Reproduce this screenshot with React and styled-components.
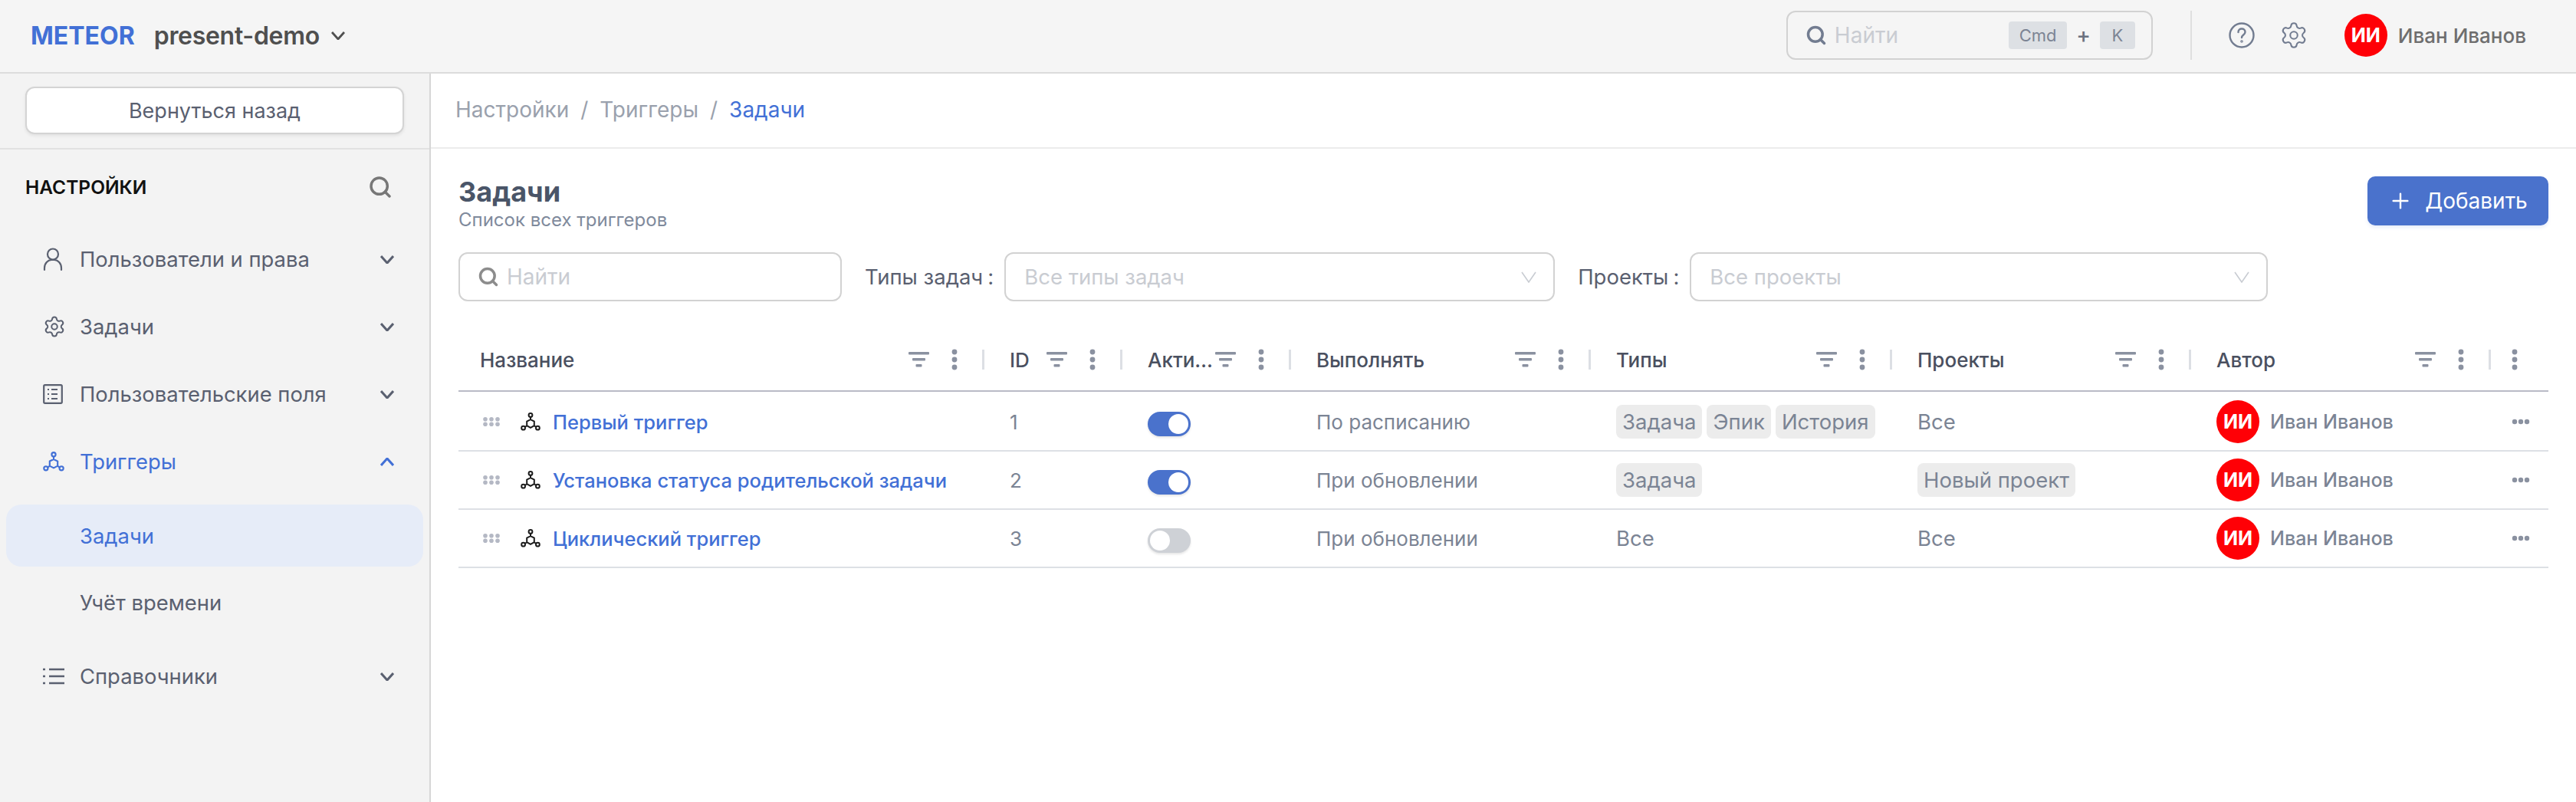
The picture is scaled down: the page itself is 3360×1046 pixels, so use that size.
import React from 'react';
import styled, { createGlobalStyle } from 'styled-components';
import { Settings, Plus, Search } from 'lucide-react';

const GlobalStyle = createGlobalStyle`
  html, body { margin: 0; padding: 0; height: 100%; background: #fff; }
  * { box-sizing: border-box; }
  body { font-family: Inter, "Noto Sans", sans-serif; overflow: hidden; }
`;

const Page = styled.div`
  display: flex;
  flex-direction: column;
  height: 100vh;
`;

const TopBar = styled.header`
  display: flex;
  align-items: center;
  height: 96px;
  flex-shrink: 0;
  padding: 0 65px 2px 40px;
  background: #f5f5f5;
  border-bottom: 2px solid #dcdcdc;
`;

const Logo = styled.span`
  font-size: 32px;
  font-weight: 700;
  color: #4270d6;
`;

const Workspace = styled.span`
  display: flex;
  align-items: center;
  gap: 15px;
  margin-left: 25px;
  font-size: 32px;
  font-weight: 600;
  color: #4f4f4f;
  letter-spacing: -0.3px;
`;

const TopRight = styled.div`
  display: flex;
  align-items: center;
  margin-left: auto;
`;

const GlobalSearch = styled.div`
  display: flex;
  align-items: center;
  width: 478px;
  height: 64px;
  padding: 0 21px 0 23px;
  border: 2px solid #d2d2d2;
  border-radius: 12px;
`;

const Placeholder = styled.span`
  margin-left: 10px;
  font-size: 28px;
  color: #c9ccd2;
`;

const Kbd = styled.span`
  display: flex;
  align-items: center;
  justify-content: center;
  width: ${(p) => p.$w}px;
  height: 36px;
  border-radius: 4px;
  background: #dde0e4;
  font-size: 22px;
  color: #7c8494;
`;

const KbdPlus = styled.span`
  margin: 0 12px;
  font-size: 28px;
  font-weight: 500;
  color: #6b7280;
`;

const KbdGroup = styled.div`
  display: flex;
  align-items: center;
  margin-left: auto;
`;

const VLine = styled.div`
  width: 2px;
  height: 64px;
  margin: 0 48px 0 49px;
  background: #dfdfdf;
`;

const IconBtn = styled.span`
  display: flex;
  color: #727c90;
  margin-right: ${(p) => p.$right}px;
`;

const Avatar = styled.span`
  display: flex;
  align-items: center;
  justify-content: center;
  flex-shrink: 0;
  width: 56px;
  height: 56px;
  border-radius: 50%;
  background: #ff0006;
  color: #fff;
  font-size: 25px;
  font-weight: 700;
`;

const TopUser = styled.span`
  margin-left: 14px;
  font-size: 26px;
  font-weight: 500;
  color: #6e6e6e;
`;

const Body = styled.div`
  display: flex;
  flex: 1;
  min-height: 0;
`;

const Sidebar = styled.aside`
  width: 562px;
  flex-shrink: 0;
  background: #f3f3f3;
  border-right: 2px solid #d6d6d6;
`;

const BackRow = styled.div`
  padding: 17px 33px 18px;
  border-bottom: 2px solid #e2e2e2;
`;

const BackButton = styled.button`
  display: block;
  width: 100%;
  height: 62px;
  border: 2px solid #d4d4d4;
  border-radius: 12px;
  background: #fff;
  box-shadow: 0 2px 4px rgba(0, 0, 0, 0.08);
  font-family: inherit;
  font-size: 27px;
  color: #5a6070;
`;

const SideHead = styled.div`
  display: flex;
  align-items: center;
  justify-content: space-between;
  height: 99px;
  padding: 0 48px 1px 33px;
  font-size: 24.5px;
  font-weight: 600;
  color: #111;
`;

const Nav = styled.nav`
  display: flex;
  flex-direction: column;
`;

const NavItem = styled.div`
  display: flex;
  align-items: center;
  height: 88px;
  padding: 0 46px 0 56px;
  font-size: 27.4px;
  color: ${(p) => (p.$active ? '#4270d6' : '#5a6070')};
`;

const NavIcon = styled.span`
  display: flex;
  width: 48px;
  flex-shrink: 0;
`;

const NavLabel = styled.span`
  flex: 1;
`;

const SubNav = styled.div`
  display: flex;
  flex-direction: column;
  padding: 8px 0;
`;

const SubItem = styled.div`
  display: flex;
  align-items: center;
  height: ${(p) => (p.$active ? 81 : 88)}px;
  margin: ${(p) => (p.$active ? '4px 8px 3px' : '0 8px')};
  padding-left: 96px;
  border-radius: 20px;
  background: ${(p) => (p.$active ? '#e6ecf8' : 'transparent')};
  font-size: 27.4px;
  color: ${(p) => (p.$active ? '#4270d6' : '#5a6070')};
`;

const Main = styled.main`
  flex: 1;
  min-width: 0;
`;

const Crumbs = styled.div`
  display: flex;
  align-items: center;
  gap: 15px;
  height: 98px;
  padding: 0 0 2px 32px;
  border-bottom: 2px solid #ececec;
  font-size: 28px;
  color: #9aa1ad;
`;

const CrumbCurrent = styled.span`
  color: #4270d6;
`;

const Content = styled.div`
  padding: 34px 36px 0;
`;

const TitleRow = styled.div`
  display: flex;
  justify-content: space-between;
  align-items: flex-start;
`;

const Title = styled.h1`
  margin: 0;
  font-size: 36px;
  line-height: 44px;
  font-weight: 700;
  color: #4a5568;
`;

const Subtitle = styled.div`
  font-size: 24px;
  line-height: 30px;
  color: #7f8a9c;
`;

const AddButton = styled.button`
  display: flex;
  align-items: center;
  justify-content: center;
  gap: 16px;
  width: 236px;
  height: 64px;
  margin-top: 2px;
  border: none;
  border-radius: 10px;
  background: #4a72cc;
  box-shadow: 0 3px 4px rgba(74, 114, 204, 0.12);
  font-family: inherit;
  font-size: 28px;
  color: #fff;
`;

const Filters = styled.div`
  display: flex;
  align-items: center;
  margin-top: 27px;
`;

const Field = styled.div`
  display: flex;
  align-items: center;
  width: ${(p) => p.$w}px;
  height: 64px;
  padding: 0 ${(p) => (p.$select ? 22 : 20)}px 0 ${(p) => (p.$select ? 24 : 23)}px;
  border: 2px solid #d2d2d2;
  border-radius: 12px;
`;

const FieldText = styled.span`
  flex: 1;
  font-size: 27.5px;
  color: #c9ccd2;
`;

const FilterLabel = styled.span`
  margin: 0 14px 0 30px;
  font-size: 27.5px;
  color: #5a6070;
`;

const Colon = styled.span`
  margin-left: 6px;
`;

const Table = styled.div`
  margin-top: 36px;
`;

const Row = styled.div`
  display: grid;
  grid-template-columns: 686px 180px 220px 391px 393px 390px 391px 1fr;
  height: ${(p) => (p.$head ? 82 : 76)}px;
  border-bottom: 2px solid ${(p) => (p.$head ? '#b9bbc6' : '#dde0e5')};

  &:nth-child(2) {
    height: 78px;
    padding-top: 2px;
  }
`;

const HeadCell = styled.div`
  display: flex;
  align-items: center;
  min-width: 0;
  padding-left: ${(p) => p.$pad || 33}px;
  font-size: 26px;
  font-weight: 500;
  color: #4a5060;
`;

const HeadText = styled.span`
  flex: 1;
  min-width: 0;
  white-space: nowrap;
`;

const HeadSep = styled.span`
  width: 3px;
  height: 26px;
  margin-left: 32px;
  background: #dcdfe4;
`;

const HeadTools = styled.span`
  display: flex;
  align-items: center;
  gap: 29px;
  color: #8a91a0;
`;

const Cell = styled.div`
  display: flex;
  align-items: center;
  gap: ${(p) => p.$gap || 0}px;
  padding-left: ${(p) => p.$pad || 33}px;
  font-size: 26px;
  color: #7b8494;
`;

const RowIcon = styled.span`
  display: flex;
  margin: 0 16px 0 27px;
  color: #1c1c1c;
`;

const NameLink = styled.a`
  font-size: 25.5px;
  font-weight: 500;
  color: #4270d6;
  white-space: nowrap;
`;

const Tag = styled.span`
  display: inline-flex;
  align-items: center;
  height: 44px;
  padding: 0 8px;
  border-radius: 8px;
  background: #ececec;
  font-size: 27.5px;
  color: #7b8494;
`;

const Toggle = styled.span`
  position: relative;
  display: block;
  width: 56px;
  height: 32px;
  margin-top: 6px;
  border-radius: 16px;
  background: ${(p) => (p.$on ? '#4a72cc' : '#ced1d6')};
  box-shadow: 0 2px 3px rgba(0, 0, 0, 0.1);

  &::after {
    content: '';
    position: absolute;
    top: 3px;
    left: ${(p) => (p.$on ? 27 : 3)}px;
    width: 26px;
    height: 26px;
    border-radius: 50%;
    background: #fff;
  }
`;

const PlainText = styled.span`
  font-size: 27.5px;
  color: #7b8494;
`;

const AuthorName = styled.span`
  font-size: 25px;
  font-weight: 500;
  color: #7b8494;
`;

const MenuCell = styled.div`
  display: flex;
  align-items: center;
  padding-left: ${(p) => p.$pad}px;
  color: #8a91a0;
`;

const Chevron = ({ w = 18, h = 11, up, stroke = 3, color = 'currentColor' }) => (
  <svg width={w} height={h} viewBox={`0 0 ${w} ${h}`} fill="none" stroke={color} strokeWidth={stroke}>
    <path d={up ? `M1 ${h - 1}L${w / 2} 1L${w - 1} ${h - 1}` : `M1 1L${w / 2} ${h - 1}L${w - 1} 1`} />
  </svg>
);

const FilterIcon = () => (
  <svg width="27" height="20" viewBox="0 0 27 20" fill="currentColor">
    <rect x="0" y="0" width="27" height="3.5" rx="1" />
    <rect x="5" y="8" width="17" height="3.5" rx="1" />
    <rect x="9.5" y="16" width="8" height="3.5" rx="1" />
  </svg>
);

const Kebab = () => (
  <svg width="8" height="28" viewBox="0 0 8 28" fill="currentColor">
    <circle cx="4" cy="4" r="3.4" />
    <circle cx="4" cy="14" r="3.4" />
    <circle cx="4" cy="24" r="3.4" />
  </svg>
);

const Ellipsis = () => (
  <svg width="24" height="8" viewBox="0 0 24 8" fill="currentColor">
    <circle cx="4" cy="4" r="3.2" />
    <circle cx="12" cy="4" r="3.2" />
    <circle cx="20" cy="4" r="3.2" />
  </svg>
);

const DragDots = () => (
  <svg width="22" height="12" viewBox="0 0 22 12" fill="#b4b8c4">
    {[3, 11, 19].map((x) => [2.8, 9.2].map((y) => <circle key={`${x}-${y}`} cx={x} cy={y} r="2.8" />))}
  </svg>
);

const TriggerIcon = ({ size = 26, height = 24 }) => (
  <svg width={size} height={height} viewBox="0 0 26 24" fill="none" stroke="currentColor" strokeWidth="2">
    <circle cx="13" cy="3.4" r="2.4" />
    <circle cx="3.6" cy="20.2" r="2.4" />
    <circle cx="22.4" cy="20.2" r="2.4" />
    <path d="M13 5.8V9.2M8.2 11.6 13 9.2l4.8 2.4v5.6L13 19.8l-4.8-2.6zM5.8 19l2.4-1.8M20.2 19l-2.4-1.8" />
  </svg>
);

const UserIcon = () => (
  <svg width="26" height="32" viewBox="0 0 26 32" fill="none" stroke="currentColor" strokeWidth="2.2" strokeLinecap="round">
    <circle cx="13" cy="9.5" r="7" />
    <path d="M2 30v-2.5C2 21.5 6.5 17 11 17h4c4.5 0 9 4.5 9 10.5V30" />
  </svg>
);

const FieldsIcon = () => (
  <svg width="26" height="26" viewBox="0 0 26 26" fill="none" stroke="currentColor" strokeWidth="2.2">
    <rect x="1.2" y="1.2" width="23.6" height="23.6" rx="1.5" />
    <path d="M11 7h8M11 13h8M11 19h8M6 7h2M6 13h2M6 19h2" />
  </svg>
);

const ListIcon = () => (
  <svg width="28" height="24" viewBox="0 0 28 24" fill="none" stroke="currentColor" strokeWidth="2.4">
    <path d="M8 3h20M8 12h20M8 21h20M0 3h3M0 12h3M0 21h3" />
  </svg>
);

const HelpIcon = () => (
  <svg width="34" height="34" viewBox="0 0 34 34" fill="none" stroke="currentColor" strokeWidth="2.4" strokeLinecap="round">
    <circle cx="17" cy="17" r="15.5" />
    <path d="M12.5 13c0-3 2-4.5 4.5-4.5s4.5 1.7 4.5 4.2c0 3.8-4.5 3.8-4.5 7.3" />
    <circle cx="17" cy="25" r="0.6" />
  </svg>
);

const navBefore = [
  { label: 'Пользователи и права', icon: <UserIcon /> },
  { label: 'Задачи', icon: <Settings size={30} strokeWidth={1.6} /> },
  { label: 'Пользовательские поля', icon: <FieldsIcon /> },
];

const columns = [
  { title: 'Название', pad: 28 },
  { title: 'ID' },
  { title: 'Акти…' },
  { title: 'Выполнять' },
  { title: 'Типы' },
  { title: 'Проекты' },
  { title: 'Автор' },
];

const rows = [
  { id: 1, name: 'Первый триггер', on: true, run: 'По расписанию', types: ['Задача', 'Эпик', 'История'], projects: null },
  { id: 2, name: 'Установка статуса родительской задачи', on: true, run: 'При обновлении', types: ['Задача'], projects: ['Новый проект'] },
  { id: 3, name: 'Циклический триггер', on: false, run: 'При обновлении', types: null, projects: null },
];

const TagList = ({ items }) =>
  items ? items.map((t) => <Tag key={t}>{t}</Tag>) : <PlainText>Все</PlainText>;

export default function App() {
  return (
    <Page>
      <GlobalStyle />
      <TopBar>
        <Logo>METEOR</Logo>
        <Workspace>
          present-demo
          <Chevron w={18} h={11} stroke={2.8} />
        </Workspace>
        <TopRight>
          <GlobalSearch>
            <Search size={28} strokeWidth={3} color="#727c90" />
            <Placeholder>Найти</Placeholder>
            <KbdGroup>
              <Kbd $w={76}>Cmd</Kbd>
              <KbdPlus>+</KbdPlus>
              <Kbd $w={46}>K</Kbd>
            </KbdGroup>
          </GlobalSearch>
          <VLine />
          <IconBtn $right={32}><HelpIcon /></IconBtn>
          <IconBtn $right={47}><Settings size={38} strokeWidth={1.3} /></IconBtn>
          <Avatar>ИИ</Avatar>
          <TopUser>Иван Иванов</TopUser>
        </TopRight>
      </TopBar>
      <Body>
        <Sidebar>
          <BackRow>
            <BackButton>Вернуться назад</BackButton>
          </BackRow>
          <SideHead>
            НАСТРОЙКИ
            <Search size={32} strokeWidth={2.6} color="#777" />
          </SideHead>
          <Nav>
            {navBefore.map((item) => (
              <NavItem key={item.label}>
                <NavIcon>{item.icon}</NavIcon>
                <NavLabel>{item.label}</NavLabel>
                <Chevron />
              </NavItem>
            ))}
            <NavItem $active>
              <NavIcon><TriggerIcon size={28} height={30} /></NavIcon>
              <NavLabel>Триггеры</NavLabel>
              <Chevron up />
            </NavItem>
            <SubNav>
              <SubItem $active>Задачи</SubItem>
              <SubItem>Учёт времени</SubItem>
            </SubNav>
            <NavItem>
              <NavIcon><ListIcon /></NavIcon>
              <NavLabel>Справочники</NavLabel>
              <Chevron />
            </NavItem>
          </Nav>
        </Sidebar>
        <Main>
          <Crumbs>
            <span>Настройки</span>
            <span>/</span>
            <span>Триггеры</span>
            <span>/</span>
            <CrumbCurrent>Задачи</CrumbCurrent>
          </Crumbs>
          <Content>
            <TitleRow>
              <div>
                <Title>Задачи</Title>
                <Subtitle>Список всех триггеров</Subtitle>
              </div>
              <AddButton>
                <Plus size={32} strokeWidth={1.8} />
                Добавить
              </AddButton>
            </TitleRow>
            <Filters>
              <Field $w={500}>
                <Search size={28} strokeWidth={3} color="#8c8c8c" />
                <Placeholder>Найти</Placeholder>
              </Field>
              <FilterLabel>Типы задач<Colon>:</Colon></FilterLabel>
              <Field $w={718} $select>
                <FieldText>Все типы задач</FieldText>
                <Chevron w={20} h={15} stroke={1.6} color="#c8ccd2" />
              </Field>
              <FilterLabel>Проекты<Colon>:</Colon></FilterLabel>
              <Field $w={754} $select>
                <FieldText>Все проекты</FieldText>
                <Chevron w={20} h={15} stroke={1.6} color="#c8ccd2" />
              </Field>
            </Filters>
            <Table>
              <Row $head>
                {columns.map((col) => (
                  <HeadCell key={col.title} $pad={col.pad}>
                    <HeadText>{col.title}</HeadText>
                    <HeadTools>
                      <FilterIcon />
                      <Kebab />
                    </HeadTools>
                    <HeadSep />
                  </HeadCell>
                ))}
                <MenuCell $pad={27}><Kebab /></MenuCell>
              </Row>
              {rows.map((row) => (
                <Row key={row.id}>
                  <Cell $pad={32}>
                    <DragDots />
                    <RowIcon><TriggerIcon /></RowIcon>
                    <NameLink>{row.name}</NameLink>
                  </Cell>
                  <Cell>{row.id}</Cell>
                  <Cell><Toggle $on={row.on} /></Cell>
                  <Cell>{row.run}</Cell>
                  <Cell $gap={6}><TagList items={row.types} /></Cell>
                  <Cell $gap={6}><TagList items={row.projects} /></Cell>
                  <Cell $gap={14}>
                    <Avatar>ИИ</Avatar>
                    <AuthorName>Иван Иванов</AuthorName>
                  </Cell>
                  <MenuCell $pad={27}><Ellipsis /></MenuCell>
                </Row>
              ))}
            </Table>
          </Content>
        </Main>
      </Body>
    </Page>
  );
}
